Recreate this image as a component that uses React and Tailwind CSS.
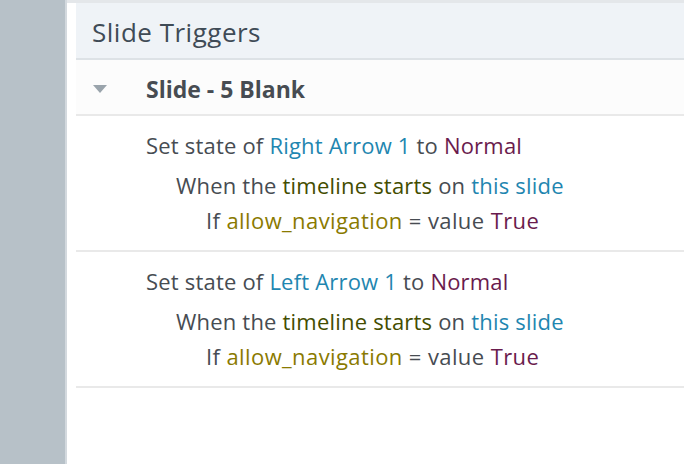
import React from "react";

const c = {
  text: "text-[#474c52]",
  obj: "text-[#1f86b0]",
  state: "text-[#6a1b4d]",
  event: "text-[#434d00]",
  varName: "text-[#8a7a00]",
};

function Trigger({ object }) {
  return (
    <div className="pt-[12px] pb-[12px] border-b-2 border-[#e9e9e9]">
      <div className={`pl-[70px] leading-[35px] ${c.text}`}>
        Set state of <span className={c.obj}>{object}</span> to{" "}
        <span className={c.state}>Normal</span>
      </div>
      <div className={`pl-[100px] mt-[5px] leading-[35px] ${c.text}`}>
        When the <span className={c.event}>timeline starts</span> on{" "}
        <span className={c.obj}>this slide</span>
      </div>
      <div className={`pl-[130px] leading-[35px] tracking-[0.4px] ${c.text}`}>
        If <span className={c.varName}>allow_navigation</span> = value{" "}
        <span className={c.state}>True</span>
      </div>
    </div>
  );
}

export default function App() {
  return (
    <div
      className="flex w-[684px] h-[464px] overflow-hidden bg-white text-[22px] tracking-[0.2px]"
      style={{ fontFamily: '"Open Sans", "Noto Sans", sans-serif' }}
    >
      {/* left rail */}
      <div className="w-[65px] shrink-0 bg-[#b7c1c8]" />
      <div className="w-[2px] shrink-0 bg-[#d3d9de]" />

      {/* panel */}
      <div className="flex-1 flex flex-col">
        <div className="h-[3px] bg-[#e4e7ea]" />
        <div className="flex-1 pl-[9px]">
          <div className="h-[57px] bg-[#eff3f7] border-b-2 border-[#dde2e6] flex items-center pl-[16px] pt-[3px] text-[26px] tracking-[0.5px] text-[#3f4b56]">
            Slide Triggers
          </div>
          <div className="h-[56px] bg-[#fcfcfc] border-b-2 border-[#e9e9e9] flex items-center pt-[4px]">
            <svg width="14" height="8" viewBox="0 0 14 8" className="ml-[17px]">
              <path d="M0 0 L14 0 L7 8 Z" fill="#9aa4ac" />
            </svg>
            <span className="ml-[39px] font-bold text-[#474c52] text-[23px] tracking-[0px]">
              Slide - 5 Blank
            </span>
          </div>
          <Trigger object="Right Arrow 1" />
          <Trigger object="Left Arrow 1" />
        </div>
      </div>
    </div>
  );
}
